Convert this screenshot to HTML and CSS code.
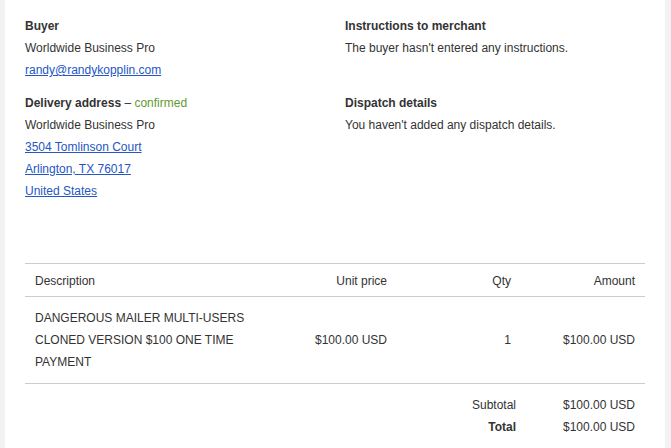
FILE: index.html
```html
<!DOCTYPE html>
<html lang="en">
  <head>
    <meta charset="UTF-8" />
    <meta name="viewport" content="width=device-width, initial-scale=1.0" />
    <title>Order details</title>
    <link rel="stylesheet" href="styles.css">
  </head>
  <body>
    <div class="panel">
      <!-- buyer / instructions -->
      <div class="info-grid">
        <section class="info">
          <h3>Buyer</h3>
          <p>Worldwide Business Pro</p>
          <p><a href="#">randy@randykopplin.com</a></p>
        </section>
        <section class="info">
          <h3>Instructions to merchant</h3>
          <p>The buyer hasn't entered any instructions.</p>
        </section>
        <section class="info">
          <h3>Delivery address <span class="dash">&ndash;</span> <span class="confirmed">confirmed</span></h3>
          <p>Worldwide Business Pro</p>
          <p><a href="#">3504 Tomlinson Court</a></p>
          <p><a href="#">Arlington, TX 76017</a></p>
          <p><a href="#">United States</a></p>
        </section>
        <section class="info">
          <h3>Dispatch details</h3>
          <p>You haven't added any dispatch details.</p>
        </section>
      </div>

      <!-- order items -->
      <table class="items">
        <thead>
          <tr>
            <th class="col-desc">Description</th>
            <th class="col-num num">Unit price</th>
            <th class="col-num num">Qty</th>
            <th class="col-num num">Amount</th>
          </tr>
        </thead>
        <tbody>
          <tr>
            <td>DANGEROUS MAILER MULTI-USERS CLONED VERSION $100 ONE TIME PAYMENT</td>
            <td class="num">$100.00 USD</td>
            <td class="num">1</td>
            <td class="num">$100.00 USD</td>
          </tr>
        </tbody>
      </table>

      <div class="totals">
        <div class="total-row">
          <span class="label">Subtotal</span>
          <span class="value">$100.00 USD</span>
        </div>
        <div class="total-row">
          <span class="label strong">Total</span>
          <span class="value">$100.00 USD</span>
        </div>
      </div>
    </div>
  </body>
</html>
```

FILE: styles.css
```css
/* page background and font */
body {
  font-family: "Liberation Sans", Arial, sans-serif;
  font-size: 12px;
  line-height: 22px;
  color: #333;
  background-color: #f2f2f2;
  margin: 0;
  padding: 0 6px 0 5px;
}

/* white container */
.panel {
  background-color: #fff;
  padding: 15px 20px 20px;
  min-height: 448px;
  box-sizing: border-box;
}

/* two-column info area */
.info-grid {
  display: grid;
  grid-template-columns: 1fr 1fr;
  column-gap: 20px;
  row-gap: 11px;
}

.info h3 {
  margin: 0;
  font-size: 12px;
  font-weight: bold;
}

.info p {
  margin: 0;
}

a {
  color: #2456c4;
}

.dash {
  font-weight: normal;
}

.confirmed {
  font-weight: normal;
  color: #5f9a32;
}

/* items table */
.items {
  width: 100%;
  margin-top: 61px;
  border-collapse: collapse;
  table-layout: fixed;
}

.items th,
.items td {
  font-weight: normal;
  text-align: left;
  vertical-align: middle;
  border-top: 1px solid #ccc;
  border-bottom: 1px solid #ccc;
  box-sizing: border-box;
}

.items th {
  padding: 6px 10px 4px;
}

.items td {
  padding: 10px 10px;
}

.items .col-desc {
  width: 40%;
}

.items .col-num {
  width: 20%;
}

.items .num {
  text-align: right;
}

/* totals */
.totals {
  padding-top: 10px;
}

.total-row {
  display: flex;
  justify-content: flex-end;
}

.total-row .label {
  text-align: right;
  padding-right: 5px;
}

.total-row .value {
  width: 124px;
  box-sizing: border-box;
  text-align: right;
  padding-right: 10px;
}

.strong {
  font-weight: bold;
}
```
